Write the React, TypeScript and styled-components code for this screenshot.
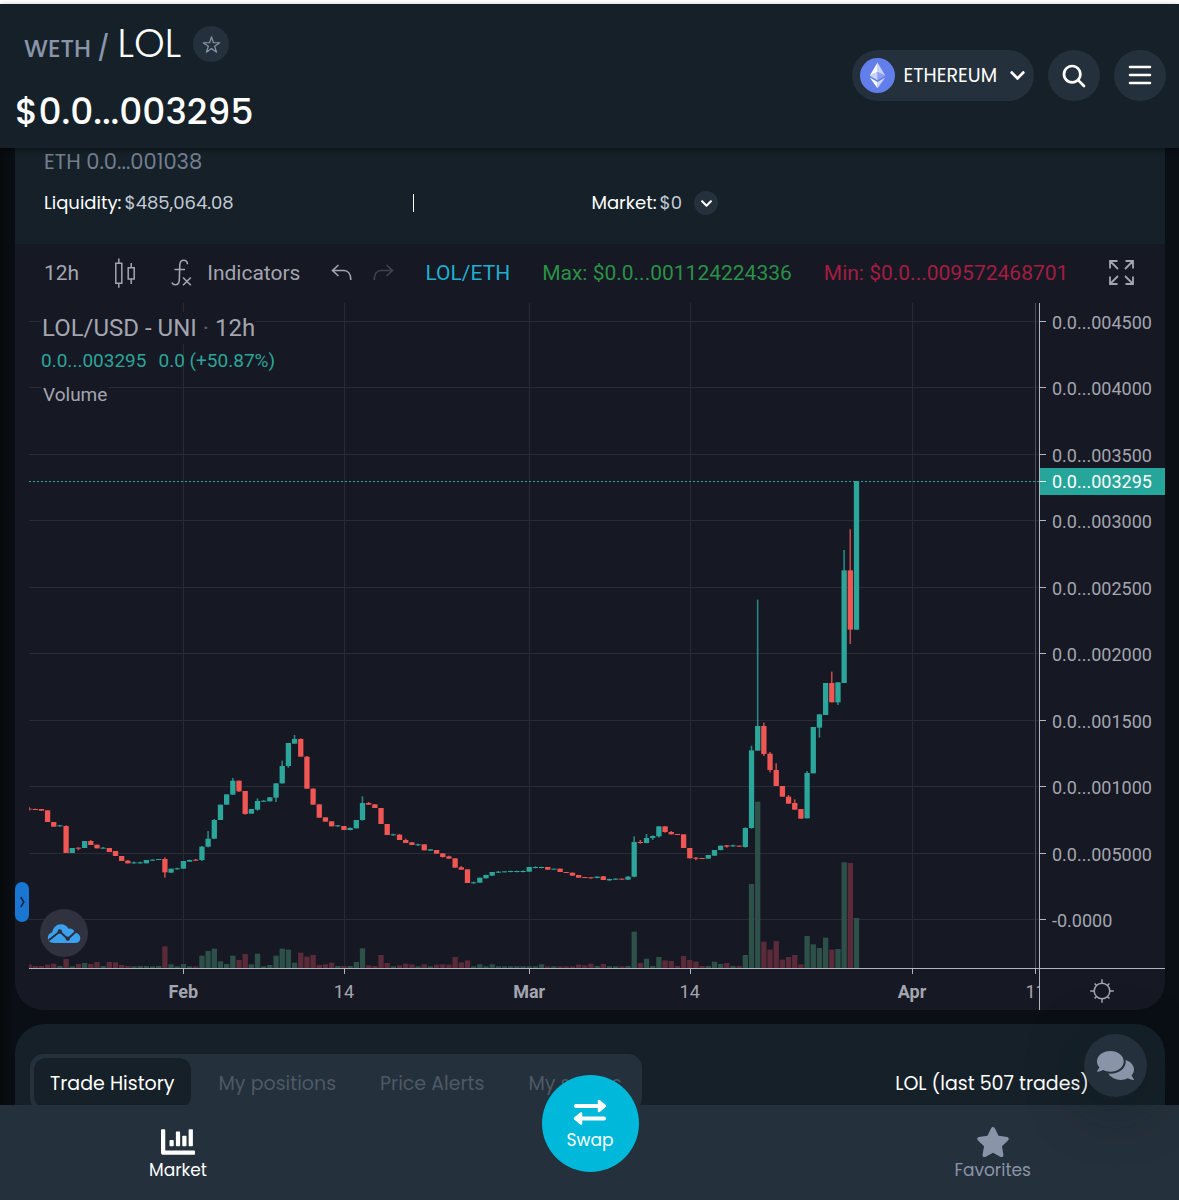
import React from "react";
import styled, { createGlobalStyle } from "styled-components";
import { FaChartBar, FaChevronDown, FaComments, FaStar } from "react-icons/fa";
import { IoSearch, IoStarOutline } from "react-icons/io5";

const color = {
  panel: "#152028",
  raised: "#24303b",
  chart: "#161823",
  grid: "#292b37",
  axis: "#b2b5be",
  label: "#a3a6af",
  muted: "#8a94a8",
  dim: "#4e5967",
  up: "#2ca59a",
  down: "#ef5654",
  volumeUp: "#2d5148",
  volumeDown: "#5c2b3a",
  accent: "#00b8d9",
};

const uiFont = `Poppins, Inter, "Open Sans", sans-serif`;
const chartFont = `Roboto, "Liberation Sans", sans-serif`;

const GlobalStyle = createGlobalStyle`
  *, *::before, *::after { box-sizing: border-box; }
  body { margin: 0; background: #0a0f16; }
  button { font: inherit; color: inherit; border: 0; padding: 0; background: none; cursor: pointer; }
  svg { display: block; flex: none; }
`;

const Shell = styled.div`
  height: 100vh;
  display: flex;
  flex-direction: column;
  border-top: 4px solid #fff;
  background: linear-gradient(to right, #060a0c, #0a0f16 16px);
  color: #fff;
  font-family: ${uiFont};
`;

/* ---------- header ---------- */

const Header = styled.header`
  position: relative;
  z-index: 1;
  flex: none;
  display: flex;
  justify-content: space-between;
  align-items: flex-start;
  padding: 18px 13px 12px 15px;
  background: ${color.panel};
  box-shadow: 0 2px 6px rgba(0, 0, 0, 0.4);
`;

const PairTitle = styled.div`
  display: flex;
  align-items: center;
  padding-left: 9px;
  height: 44px;
`;

const PairText = styled.h1`
  display: flex;
  align-items: baseline;
  margin: 0;
  padding-top: 4px;
  gap: 8px;
  font-size: 24px;
  font-weight: 500;
  line-height: 44px;
  color: ${color.muted};
`;

const BaseToken = styled.span`
  font-size: 39px;
  font-weight: 300;
  color: #fff;
`;

const FavoriteButton = styled.button`
  display: grid;
  place-items: center;
  width: 36px;
  height: 36px;
  margin-left: 12px;
  border-radius: 50%;
  background: ${color.raised};
  color: ${color.muted};
`;

const Price = styled.div`
  margin-top: 22px;
  font-size: 36px;
  font-weight: 500;
  line-height: 48px;
`;

const Controls = styled.div`
  display: flex;
  gap: 14px;
  margin-top: 28px;
`;

const NetworkButton = styled.button`
  display: flex;
  align-items: center;
  height: 51px;
  padding: 0 8px;
  border-radius: 26px;
  background: ${color.raised};
  font-size: 19px;

  span { margin: 0 12px 0 9px; }
`;

const RoundButton = styled.button`
  display: grid;
  place-items: center;
  width: 52px;
  height: 51px;
  border-radius: 26px;
  background: ${color.raised};
`;

/* ---------- scrolling body ---------- */

const Main = styled.main`
  flex: 1;
  min-height: 0;
  overflow-y: auto;
  scrollbar-width: none;
  padding: 0 14px 0 15px;
`;

const Stats = styled.section`
  padding: 0 15px 27px 29px;
  background: ${color.panel};
`;

const EthPrice = styled.div`
  font-size: 21px;
  line-height: 28px;
  color: #737e8f;
`;

const StatRow = styled.div`
  display: grid;
  grid-template-columns: 33fr 16fr 50fr;
  align-items: center;
  margin-top: 13px;
  font-size: 18px;
  line-height: 28px;
`;

const Stat = styled.div`
  display: flex;
  align-items: center;
  gap: 3px;
  white-space: nowrap;
`;

const StatValue = styled.span`
  color: #c3cad6;
`;

const Divider = styled.span`
  width: 1px;
  height: 18px;
  background: #fff;
`;

const ExpandButton = styled.button`
  display: grid;
  place-items: center;
  width: 24px;
  height: 24px;
  margin-left: 9px;
  border-radius: 50%;
  background: ${color.raised};
`;

/* ---------- chart ---------- */

const ChartCard = styled.section`
  position: relative;
  overflow: hidden;
  border-radius: 0 0 28px 28px;
  background: ${color.chart};
  color: ${color.label};
  font-family: ${chartFont};
`;

const Toolbar = styled.div`
  display: flex;
  align-items: center;
  height: 59px;
  padding: 0 31px 2px 29px;
  font-size: 21px;
  white-space: nowrap;
`;

const ToolGroup = styled.div<{ $gap: number }>`
  display: flex;
  align-items: center;
  gap: ${(p) => p.$gap}px;
  margin-right: 31px;
`;

const ToolButton = styled.button<{ $faded?: boolean }>`
  display: flex;
  align-items: center;
  gap: 15px;
  opacity: ${(p) => (p.$faded ? 0.3 : 1)};
`;

const Readout = styled.span<{ $color: string }>`
  color: ${(p) => p.$color};
`;

const FullscreenButton = styled.button`
  margin-left: auto;
`;

const Plot = styled.div`
  position: relative;
`;

const PlotSvg = styled.svg`
  width: 100%;
  height: auto;
  font-family: ${chartFont};
  font-size: 18px;
  fill: ${color.label};
`;

const Legend = styled.div`
  position: absolute;
  top: 9px;
  left: 26px;
`;

const LegendTitle = styled.div`
  width: fit-content;
  padding: 0 1px;
  font-size: 24px;
  line-height: 32px;
  background: ${color.chart};

  span { opacity: 0.5; }
`;

const LegendValues = styled.div`
  display: flex;
  gap: 12px;
  font-size: 19px;
  line-height: 34px;
  color: ${color.up};
`;

const LegendVolume = styled.div`
  width: fit-content;
  padding: 0 2px;
  font-size: 19px;
  line-height: 34px;
  background: ${color.chart};
`;

const DrawerHandle = styled.button`
  position: absolute;
  left: 0;
  bottom: 88px;
  display: grid;
  place-items: center;
  width: 14px;
  height: 40px;
  border-radius: 7px;
  background: #1976d2;
`;

const ChartLogo = styled.a`
  position: absolute;
  left: 25px;
  bottom: 53px;
  display: grid;
  place-items: center;
  width: 48px;
  height: 48px;
  border-radius: 50%;
  background: #30323f;
`;

/* ---------- trades ---------- */

const Trades = styled.section`
  display: flex;
  justify-content: space-between;
  align-items: flex-start;
  margin-top: 14px;
  padding: 30px 76px 30px 15px;
  min-height: 130px;
  border-radius: 30px 30px 0 0;
  background: ${color.panel};
  font-size: 19px;
`;

const Tabs = styled.div`
  display: flex;
  gap: 12px;
  padding: 4px;
  border-radius: 14px;
  background: ${color.raised};
`;

const Tab = styled.button<{ $active?: boolean }>`
  height: 50px;
  padding: 0 16px;
  border-radius: 12px;
  background: ${(p) => (p.$active ? color.panel : "transparent")};
  color: ${(p) => (p.$active ? "#fff" : color.dim)};
  white-space: nowrap;
`;

const TradeCount = styled.div`
  line-height: 60px;
  white-space: nowrap;
`;

/* ---------- bottom bar ---------- */

const BottomBar = styled.nav`
  position: relative;
  z-index: 1;
  flex: none;
  display: grid;
  grid-template-columns: 1fr auto 1fr;
  align-items: start;
  height: 95px;
  padding: 0 148px 0 149px;
  background: ${color.raised};
  font-size: 17px;
  line-height: 22px;
`;

const NavButton = styled.button<{ $end?: boolean }>`
  display: flex;
  flex-direction: column;
  align-items: center;
  justify-self: ${(p) => (p.$end ? "end" : "start")};
  padding-top: 20px;
  color: ${(p) => (p.$end ? color.muted : "#fff")};
`;

const SwapButton = styled.button`
  display: flex;
  flex-direction: column;
  align-items: center;
  justify-content: center;
  gap: 3px;
  width: 97px;
  height: 97px;
  padding-top: 2px;
  margin-top: -30px;
  border-radius: 50%;
  background: ${color.accent};
`;

const ChatButton = styled.button`
  position: fixed;
  z-index: 2;
  right: 32px;
  bottom: 103px;
  display: grid;
  place-items: center;
  width: 63px;
  height: 63px;
  border-radius: 50%;
  background: ${color.raised};
  color: ${color.muted};
  box-shadow: 0 10px 60px rgba(10, 20, 20, 0.35);
`;

/* ---------- icons ---------- */

const EthereumLogo = () => (
  <svg width="35" height="35" viewBox="0 0 35 35" aria-hidden="true">
    <circle cx="17.5" cy="17.5" r="17.5" fill="#627eea" />
    <path d="M17.5 4.5v9.6l7.8 3.7z" fill="#c9d2f8" />
    <path d="M17.5 4.5L9.7 17.8l7.8-3.7z" fill="#fff" />
    <path d="M17.5 14.1v8.2l7.8-4.5z" fill="#8a9ff0" />
    <path d="M17.5 14.1l-7.8 3.7 7.8 4.5z" fill="#c9d2f8" />
    <path d="M17.5 24.1v6.2l7.8-10.8z" fill="#c9d2f8" />
    <path d="M9.7 19.5l7.8 10.8v-6.2z" fill="#fff" />
  </svg>
);

const MenuIcon = () => (
  <svg width="24" height="22" viewBox="0 0 24 22" fill="none" stroke="#fff" strokeWidth="2.6" strokeLinecap="round" aria-hidden="true">
    <path d="M2 2h20M2 10h20M2 18h20" />
  </svg>
);

const CandlesIcon = () => (
  <svg width="22" height="32" viewBox="0 0 22 32" fill="none" stroke="currentColor" strokeWidth="1.5" aria-hidden="true">
    <path d="M1.8 6.2h6v20h-6zM4.8 1.5v4.7M4.8 26.2v4.6M14.2 10.8h6v11.2h-6zM17.2 6v4.8M17.2 22v5" />
  </svg>
);

const FunctionIcon = () => (
  <svg width="21" height="28" viewBox="0 0 21 28" fill="none" stroke="currentColor" strokeWidth="1.6" aria-hidden="true">
    <path d="M16.5 5.2C16.3 2.8 15 1.3 12.8 1.3c-2.600 0-3.800 1.700-4 4.400L8.300 21c-.1 3-1.500 4.800-4.100 4.800-1.700 0-2.800-.9-3.200-2.400M3.500 10.500H14M12 18.500l7.800 7.800M19.800 18.500L12 26.300" />
  </svg>
);

const ArrowIcon = ({ flip }: { flip?: boolean }) => (
  <svg width="21" height="17" viewBox="0 0 21 17" fill="none" stroke="currentColor" strokeWidth="1.6" aria-hidden="true">
    <path
      transform={flip ? "matrix(-1 0 0 1 21 0)" : undefined}
      d="M7.500 1L1.500 6.500l6 5.500M1.500 6.500H13c4 0 6.800 3.500 6.800 9.500"
    />
  </svg>
);

const FullscreenIcon = () => (
  <svg width="25" height="25" viewBox="0 0 25 25" fill="none" stroke="currentColor" strokeWidth="1.8" aria-hidden="true">
    <path d="M1 8.500V1h7.500M1 1l8 8M16.500 1H24v7.500M24 1l-8 8M1 16.500V24h7.500M1 24l8-8M16.500 24H24v-7.500M24 24l-8-8" />
  </svg>
);

const CloudIcon = () => (
  <svg width="34" height="21" viewBox="0 0 34 21" aria-hidden="true">
    <path
      d="M6.500 20C3 20 .8 17.800.8 14.800c0-2.700 1.800-4.900 4.500-5.500C6 4.500 9.500 1.200 14 1.200c3.300 0 6 1.700 7.500 4.500 3-.5 5.500 1.200 6.300 3.900 3.300.6 5.500 3 5.500 5.700 0 2.900-2.200 4.700-5 4.700z"
      fill="#3ba1ee"
    />
    <path d="M1.500 17.500L12.800 8.500l8 7.500L30.500 7" fill="none" stroke="#2b2f3c" strokeWidth="2" />
    <circle cx="12.800" cy="8.500" r="2.200" fill="#2b2f3c" />
    <circle cx="20.800" cy="15.600" r="2.200" fill="#2b2f3c" />
  </svg>
);

const HandleChevron = () => (
  <svg width="5" height="12" viewBox="0 0 5 12" fill="none" stroke="#12283f" strokeWidth="1.600" aria-hidden="true">
    <path d="M.8 1l3 5-3 5" />
  </svg>
);

const SwapIcon = () => (
  <svg width="34" height="28" viewBox="0 0 34 28" fill="#fff" stroke="#fff" strokeLinejoin="round" strokeLinecap="round" aria-hidden="true">
    <path d="M3 8h22M31 20.500H9" strokeWidth="4" />
    <path d="M26 3l6 5-6 5zM8 15.500l-6 5 6 5z" strokeWidth="2.500" />
  </svg>
);

/* ---------- chart data ---------- */

/*
 * One row for each 12-hour candle: direction, body top, body bottom, high, low, volume.
 * Levels are thirds of a plot unit below the 0.0...001500 grid line.
 */
type Row = [1 | 0, number, number, number, number, number];

const rows: Row[] = [
  [0, 266, 269, 261, 272, 11], [0, 267, 270, 266, 270, 6], [0, 267, 272, 267, 272, 6],
  [0, 271, 306, 271, 306, 10], [0, 306, 320, 306, 320, 13], [1, 316, 319, 315, 320, 6],
  [0, 318, 399, 316, 399, 27], [1, 384, 399, 384, 399, 5], [0, 383, 386, 382, 391, 12],
  [1, 363, 384, 363, 384, 15], [0, 363, 375, 360, 375, 12], [0, 374, 385, 374, 385, 18],
  [1, 383, 386, 381, 386, 6], [0, 384, 396, 384, 396, 18], [0, 393, 408, 393, 408, 17],
  [0, 408, 423, 408, 423, 9], [0, 422, 430, 420, 430, 6], [1, 427, 430, 425, 431, 5],
  [1, 427, 430, 425, 431, 6], [1, 420, 430, 420, 430, 6], [1, 419, 422, 418, 423, 5],
  [1, 417, 420, 417, 420, 6], [0, 417, 457, 412, 473, 65], [1, 446, 458, 446, 458, 11],
  [1, 445, 448, 443, 449, 5], [1, 423, 446, 423, 446, 12], [1, 420, 425, 419, 425, 5],
  [0, 419, 422, 417, 423, 5], [1, 380, 420, 378, 423, 37], [1, 356, 380, 333, 382, 51],
  [1, 300, 356, 297, 357, 58], [1, 254, 300, 254, 300, 20], [1, 223, 254, 223, 254, 12],
  [1, 182, 224, 174, 224, 37], [0, 182, 214, 182, 216, 24], [0, 213, 282, 213, 284, 42],
  [1, 267, 281, 267, 281, 11], [1, 243, 269, 235, 272, 43], [1, 242, 245, 241, 246, 5],
  [1, 232, 244, 231, 244, 9], [1, 190, 233, 190, 246, 37], [1, 138, 190, 122, 191, 58],
  [1, 69, 138, 69, 143, 55], [1, 57, 71, 45, 71, 16], [0, 57, 110, 55, 110, 46],
  [0, 110, 206, 108, 206, 34], [0, 206, 254, 205, 254, 39], [0, 253, 293, 253, 293, 9],
  [0, 292, 305, 292, 305, 11], [0, 304, 319, 304, 319, 16], [1, 316, 319, 315, 321, 6],
  [0, 318, 330, 318, 330, 6], [1, 324, 330, 322, 331, 6], [1, 300, 325, 300, 325, 18],
  [1, 249, 300, 229, 302, 59], [0, 249, 254, 246, 254, 8], [0, 253, 264, 253, 264, 6],
  [0, 264, 312, 264, 312, 39], [0, 312, 345, 312, 345, 15], [1, 343, 346, 341, 347, 5],
  [0, 344, 360, 342, 360, 8], [0, 360, 369, 356, 369, 13], [0, 367, 375, 366, 375, 11],
  [1, 373, 376, 371, 378, 5], [0, 373, 391, 373, 391, 11], [1, 388, 392, 387, 392, 5],
  [0, 390, 401, 390, 401, 10], [0, 400, 411, 400, 413, 11], [0, 409, 416, 407, 416, 10],
  [0, 415, 443, 415, 443, 33], [0, 442, 449, 438, 449, 17], [0, 448, 489, 448, 489, 23],
  [1, 487, 490, 485, 491, 5], [1, 473, 488, 473, 488, 11], [1, 465, 475, 464, 475, 5],
  [1, 456, 467, 456, 467, 11], [1, 455, 458, 453, 459, 5], [1, 454, 457, 454, 457, 5],
  [1, 453, 456, 452, 457, 5], [1, 453, 456, 452, 457, 5], [1, 453, 456, 451, 457, 5],
  [1, 441, 455, 441, 455, 5], [1, 441, 444, 439, 445, 5], [1, 441, 444, 440, 445, 11],
  [0, 441, 449, 441, 449, 5], [1, 446, 449, 446, 449, 5], [0, 446, 456, 446, 456, 5],
  [0, 456, 459, 456, 459, 5], [0, 458, 467, 458, 467, 5], [0, 465, 473, 465, 473, 10],
  [0, 471, 474, 471, 474, 8], [0, 472, 475, 472, 476, 13], [1, 470, 474, 469, 475, 6],
  [0, 469, 480, 468, 480, 12], [1, 477, 481, 476, 483, 5], [1, 476, 479, 475, 480, 5],
  [0, 476, 479, 476, 479, 5], [1, 470, 479, 468, 480, 6], [1, 366, 470, 349, 472, 109],
  [0, 366, 369, 360, 371, 15], [1, 354, 369, 342, 370, 28], [1, 348, 354, 346, 360, 6],
  [1, 319, 349, 318, 353, 33], [0, 319, 336, 319, 338, 23], [0, 336, 343, 333, 343, 21],
  [0, 342, 345, 342, 345, 6], [0, 343, 384, 343, 384, 36], [0, 384, 415, 384, 415, 24],
  [0, 413, 416, 411, 421, 19], [0, 414, 417, 414, 417, 6], [1, 405, 416, 405, 416, 6],
  [1, 390, 407, 390, 408, 19], [1, 377, 390, 377, 391, 12], [0, 376, 380, 375, 383, 15],
  [1, 376, 379, 374, 381, 6], [0, 377, 380, 377, 380, 6], [1, 324, 381, 322, 383, 39],
  [1, 91, 324, 77, 326, 252], [1, 18, 92, -361, 92, 499], [0, 18, 102, 8, 108, 79],
  [0, 101, 150, 96, 157, 55], [0, 150, 198, 130, 198, 81], [0, 198, 230, 198, 230, 25],
  [0, 230, 251, 225, 251, 33], [0, 249, 269, 238, 269, 39], [0, 267, 296, 267, 296, 11],
  [1, 159, 295, 153, 295, 96], [1, 21, 160, 21, 160, 71], [1, -17, 23, -17, 53, 60],
  [1, -111, -15, -111, -15, 91], [0, -111, -53, -145, -53, 55], [1, -113, -53, -113, -45, 57],
  [1, -449, -111, -510, -111, 317], [0, -449, -271, -572, -228, 315], [1, -717, -271, -717, -271, 150],
];

const STEP = 6.175;
const BASE = 417;
const FLOOR = 665;
const candleX = (i: number) => 14 + i * STEP;
const levelY = (v: number) => BASE + v / 3;

const priceTicks = ["0.0...004500", "0.0...004000", "0.0...003500", "0.0...003000", "0.0...002500", "0.0...002000", "0.0...001500", "0.0...001000", "0.0...005000", "-0.0000"];
const tickY = (i: number) => Math.floor(18 + i * 66.5);
const dateTicks = [
  { label: "Feb", at: 25, bold: true },
  { label: "14", at: 51, bold: false },
  { label: "Mar", at: 81, bold: true },
  { label: "14", at: 107, bold: false },
  { label: "Apr", at: 143, bold: true },
  { label: "11", at: 163, bold: false },
];

const PriceChart = () => (
  <PlotSvg viewBox="0 0 1150 707" role="img" aria-label="LOL/USD 12h candles">
    <defs>
      <clipPath id="plot-area">
        <rect x="14" y="0" width="1010" height="707" />
      </clipPath>
    </defs>
    <g clipPath="url(#plot-area)">
      {priceTicks.map((t, i) => (
        <rect key={t} x="14" y={tickY(i)} width="1010" height="1" fill={color.grid} />
      ))}
      {dateTicks.map((t) => (
        <g key={t.at}>
          <rect x={Math.round(candleX(t.at) - 0.2)} y="0" width="1" height={FLOOR} fill={t.at === 163 ? "#4b4d58" : color.grid} />
          <rect x={Math.round(candleX(t.at) - 0.2)} y={FLOOR} width="1" height="6" fill={color.axis} />
          <text x={candleX(t.at)} y="695" textAnchor="middle" fontWeight={t.bold ? 700 : 400}>
            {t.label}
          </text>
        </g>
      ))}
      {rows.map(([up, top, bottom, high, low, volume], i) => (
        <g key={i}>
          <rect x={candleX(i) - 2.6} y={FLOOR - volume / 3} width="5.300" height={volume / 3} fill={up ? color.volumeUp : color.volumeDown} />
          <g fill={up ? color.up : color.down}>
            <rect x={candleX(i) - 0.8} y={levelY(high)} width="1.600" height={(low - high) / 3} opacity="0.8" />
            <rect x={candleX(i) - 2.6} y={levelY(top)} width="5.300" height={(bottom - top) / 3} />
          </g>
        </g>
      ))}
      <line x1="14" x2="1024" y1="178.500" y2="178.500" stroke={color.up} strokeDasharray="2 2" shapeRendering="crispEdges" />
    </g>
    <rect x="14" y={FLOOR} width="1136" height="1" fill={color.axis} />
    <rect x="1024" y="0" width="1" height="707" fill={color.axis} />
    {priceTicks.map((t, i) => (
      <g key={t}>
        <rect x="1025" y={tickY(i)} width="6" height="1" fill={color.axis} />
        <text x="1037" y={tickY(i) + 8}>{t}</text>
      </g>
    ))}
    <rect x="1025" y="165" width="125" height="27" fill="#26a69a" />
    <rect x="1025" y="178" width="6" height="1" fill="#fff" />
    <text x="1037" y="185" fill="#fff">0.0...003295</text>
    <g fill="none" stroke={color.label} strokeWidth="1.500">
      <circle cx="1087" cy="688" r="7.800" />
      {[0, 45, 90, 135, 180, 225, 270, 315].map((a) => (
        <path key={a} d={a % 90 ? "M1087 680v-2.500" : "M1087 680v-3.800"} transform={`rotate(${a} 1087 688)`} />
      ))}
    </g>
  </PlotSvg>
);

export default function App() {
  return (
    <Shell>
      <GlobalStyle />
      <Header>
        <div>
          <PairTitle>
            <PairText>
              <span>WETH /</span>
              <BaseToken>LOL</BaseToken>
            </PairText>
            <FavoriteButton aria-label="Add to favorites">
              <IoStarOutline size={19} />
            </FavoriteButton>
          </PairTitle>
          <Price>$0.0...003295</Price>
        </div>
        <Controls>
          <NetworkButton>
            <EthereumLogo />
            <span>ETHEREUM</span>
            <FaChevronDown size={17} />
          </NetworkButton>
          <RoundButton aria-label="Search">
            <IoSearch size={28} />
          </RoundButton>
          <RoundButton aria-label="Menu">
            <MenuIcon />
          </RoundButton>
        </Controls>
      </Header>

      <Main>
        <Stats>
          <EthPrice>ETH 0.0...001038</EthPrice>
          <StatRow>
            <Stat>
              Liquidity: <StatValue>$485,064.08</StatValue>
            </Stat>
            <Divider />
            <Stat>
              Market: <StatValue>$0</StatValue>
              <ExpandButton aria-label="Show more">
                <FaChevronDown size={13} />
              </ExpandButton>
            </Stat>
          </StatRow>
        </Stats>

        <ChartCard>
          <Toolbar>
            <ToolGroup $gap={35}>
              <ToolButton>12h</ToolButton>
              <ToolButton aria-label="Chart type">
                <CandlesIcon />
              </ToolButton>
              <ToolButton>
                <FunctionIcon />
                Indicators
              </ToolButton>
            </ToolGroup>
            <ToolGroup $gap={21}>
              <ToolButton aria-label="Undo">
                <ArrowIcon />
              </ToolButton>
              <ToolButton aria-label="Redo" $faded>
                <ArrowIcon flip />
              </ToolButton>
            </ToolGroup>
            <ToolGroup $gap={32}>
              <Readout $color="#1eaed0">LOL/ETH</Readout>
              <Readout $color="#2a9147">Max: $0.0...001124224336</Readout>
              <Readout $color="#a51d41">Min: $0.0...009572468701</Readout>
            </ToolGroup>
            <FullscreenButton aria-label="Fullscreen">
              <FullscreenIcon />
            </FullscreenButton>
          </Toolbar>
          <Plot>
            <PriceChart />
            <Legend>
              <LegendTitle>
                LOL/USD - UNI <span>·</span> 12h
              </LegendTitle>
              <LegendValues>
                <span>0.0...003295</span>
                <span>0.0 (+50.87%)</span>
              </LegendValues>
              <LegendVolume>Volume</LegendVolume>
            </Legend>
            <DrawerHandle aria-label="Show drawing tools">
              <HandleChevron />
            </DrawerHandle>
            <ChartLogo href="#" aria-label="Chart provider">
              <CloudIcon />
            </ChartLogo>
          </Plot>
        </ChartCard>

        <Trades>
          <Tabs>
            <Tab $active>Trade History</Tab>
            <Tab>My positions</Tab>
            <Tab>Price Alerts</Tab>
            <Tab>My swaps</Tab>
          </Tabs>
          <TradeCount>LOL (last 507 trades)</TradeCount>
        </Trades>
      </Main>

      <BottomBar>
        <NavButton>
          <FaChartBar size={34} />
          Market
        </NavButton>
        <SwapButton>
          <SwapIcon />
          Swap
        </SwapButton>
        <NavButton $end>
          <FaStar size={34} />
          Favorites
        </NavButton>
      </BottomBar>

      <ChatButton aria-label="Open chat">
        <FaComments size={37} />
      </ChatButton>
    </Shell>
  );
}
